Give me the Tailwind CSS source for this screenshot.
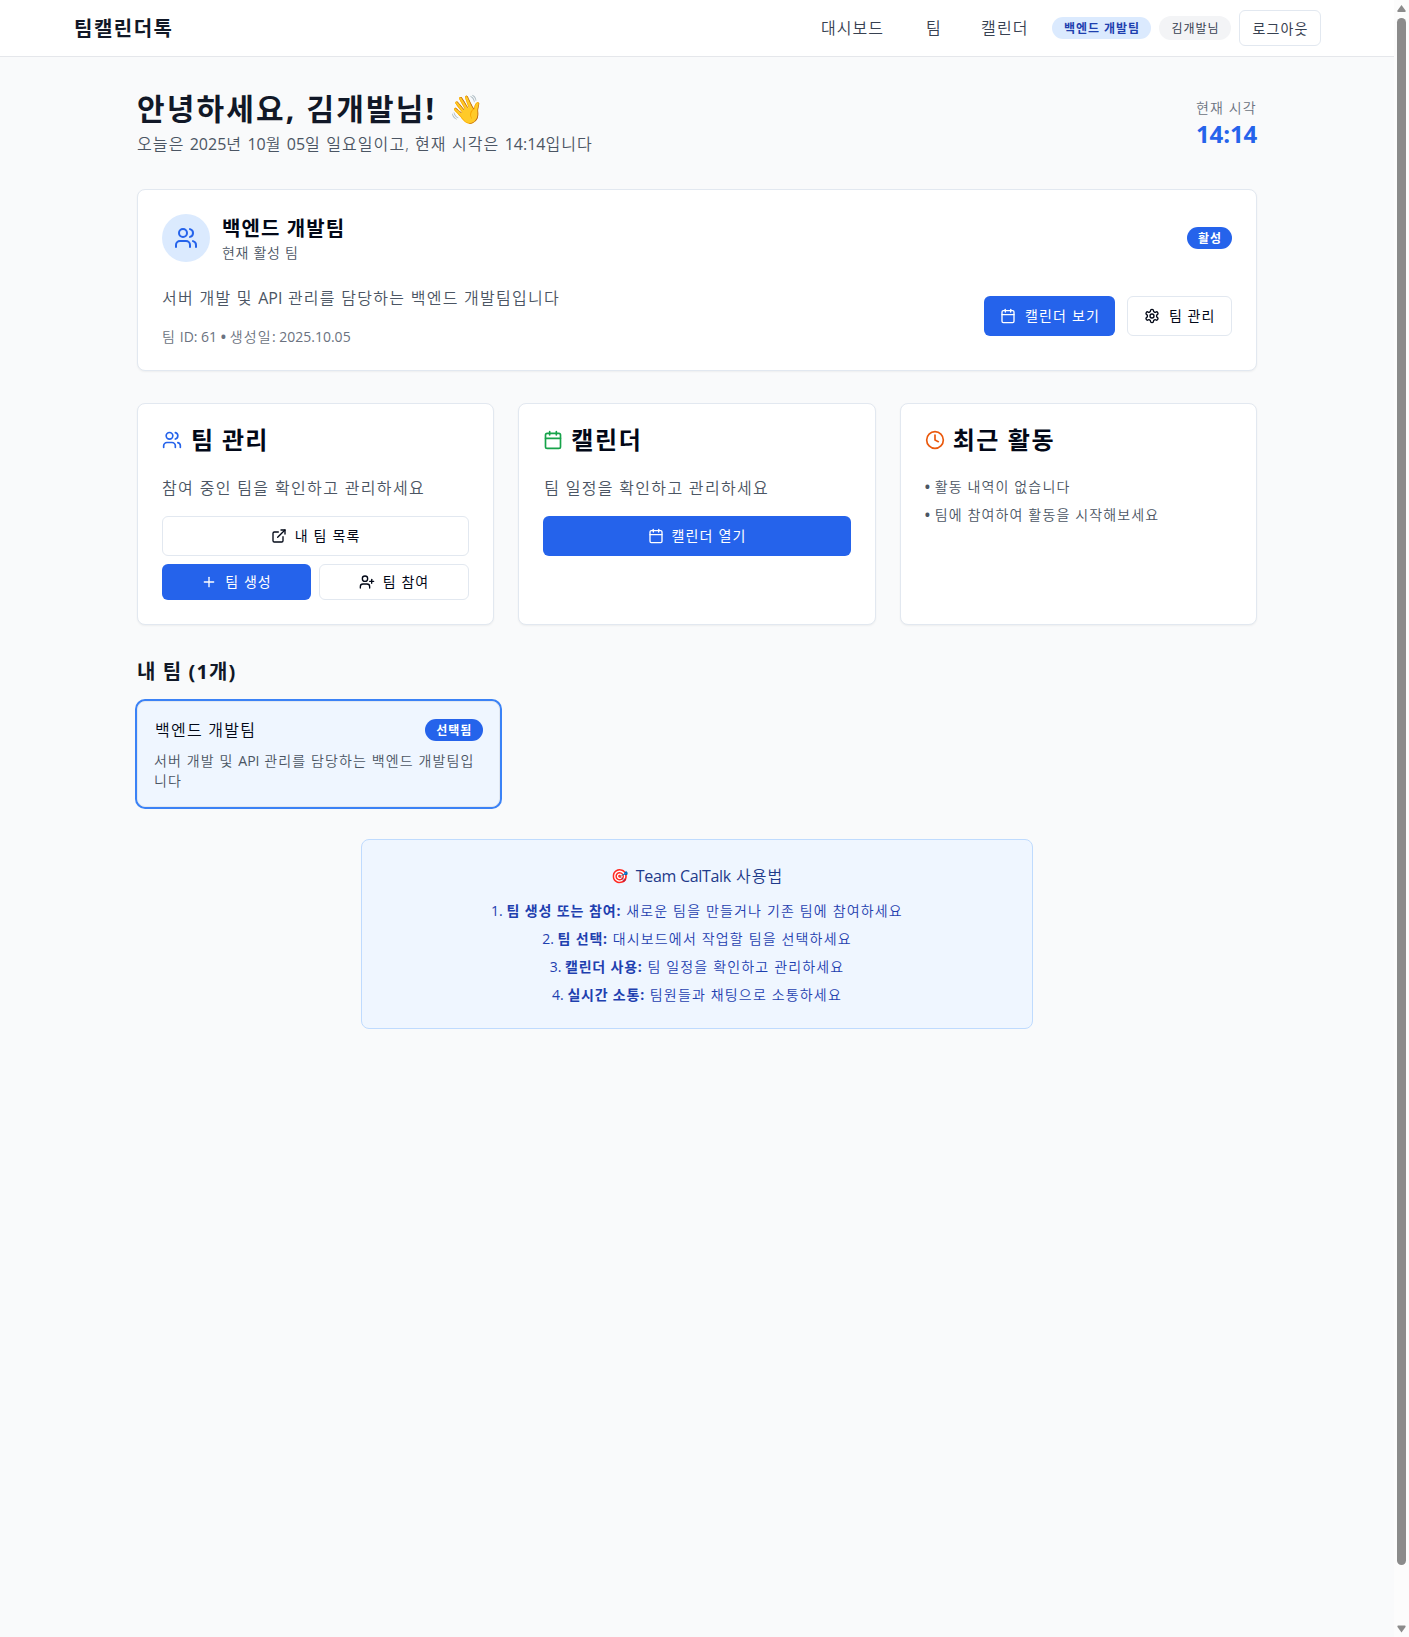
<!DOCTYPE html>
<html lang="ko">
<head>
<meta charset="utf-8">
<title>팀캘린더톡</title>
<script src="https://cdn.jsdelivr.net/npm/@tailwindcss/browser@4"></script>
</head>
<body class="flex h-[1637px] overflow-hidden bg-[#f9fafb] font-['Open_Sans','Noto_Sans_CJK_KR',sans-serif] font-[350] text-[#020817]">
<svg class="hidden">
  <g id="users"><path d="M16 21v-2a4 4 0 0 0-4-4H6a4 4 0 0 0-4 4v2"/><circle cx="9" cy="7" r="4"/><path d="M22 21v-2a4 4 0 0 0-3-3.87"/><path d="M16 3.13a4 4 0 0 1 0 7.75"/></g>
  <g id="calendar"><path d="M8 2v4"/><path d="M16 2v4"/><rect width="18" height="18" x="3" y="4" rx="2"/><path d="M3 10h18"/></g>
</svg>
<div class="flex min-w-0 flex-1 flex-col">
  <header class="h-[57px] border-b border-[#e5e7eb] bg-white">
    <div class="mx-auto flex h-14 max-w-7xl items-center justify-between px-4">
      <div class="whitespace-nowrap pl-px pt-0.5 text-xl font-bold tracking-[1.5px] text-[#111827]">팀캘린더톡</div>
      <div class="flex items-center whitespace-nowrap text-[#374151]">
        <nav class="flex items-center text-base">
          <a class="w-[105px] tracking-[1px]">대시보드</a>
          <a class="w-[55px]">팀</a>
          <a class="w-[71px] tracking-[1.2px]">캘린더</a>
        </nav>
        <div class="flex items-center gap-2">
          <span class="flex h-[22px] w-[99px] items-center justify-center rounded-full bg-[#dbeafe] pl-px pt-px text-xs font-bold tracking-[0.95px] text-[#1e40af]">백엔드 개발팀</span>
          <span class="flex h-6 w-[72px] items-center justify-center rounded-full bg-[#f3f4f6] pl-px pt-px text-xs font-normal tracking-[0.9px]">김개발님</span>
          <button class="flex h-9 w-[82px] items-center justify-center rounded-md border border-[#e2e8f0] bg-white pl-px pt-px text-sm font-normal tracking-[1.1px]">로그아웃</button>
        </div>
      </div>
    </div>
  </header>

  <main class="mx-auto w-[1120px] pt-8">
    <div class="flex h-[68px] items-center justify-between whitespace-nowrap">
      <div>
        <h1 class="flex h-9 items-center text-3xl font-bold text-[#111827]"><span class="w-[312px] tracking-[2.15px]">안녕하세요, 김개발님!</span><span class="text-[28px]">👋</span></h1>
        <p class="h-7 pt-[5px] text-base leading-6 tracking-[1.1px] text-[#4b5563]">오늘은 <span class="font-normal tracking-normal">2025</span>년 <span class="font-normal tracking-normal">10</span>월 <span class="font-normal tracking-normal">05</span>일 일요일이고, 현재 시각은 <span class="font-normal tracking-normal">14:14</span>입니다</p>
      </div>
      <div class="w-[61px] pt-px">
        <div class="text-sm tracking-[1.1px] text-[#6b7280]">현재 시각</div>
        <div class="text-2xl font-bold tracking-[-0.1px] text-[#2563eb]">14:14</div>
      </div>
    </div>

    <section class="mt-8 h-[182px] whitespace-nowrap rounded-lg border border-[#e2e8f0] bg-white p-6 shadow-xs">
      <div class="flex items-center justify-between">
        <div class="flex items-center gap-3">
          <div class="flex size-12 items-center justify-center rounded-full bg-[#dbeafe]">
            <svg class="size-6 text-[#2563eb]" viewBox="0 0 24 24" fill="none" stroke="currentColor" stroke-width="2" stroke-linecap="round" stroke-linejoin="round"><use href="#users"/></svg>
          </div>
          <div class="h-12 pt-px">
            <h3 class="text-xl font-bold leading-7 tracking-[1.1px]">백엔드 개발팀</h3>
            <p class="text-sm leading-5 tracking-[0.7px] text-[#4b5563]">현재 활성 팀</p>
          </div>
        </div>
        <span class="flex h-[22px] w-[45px] items-center justify-center rounded-full bg-[#2563eb] pl-px pt-px text-xs font-bold tracking-[0.9px] text-white">활성</span>
      </div>
      <div class="mt-6 flex h-[60px] items-center justify-between">
        <div class="h-[60px]">
          <p class="text-base leading-6 tracking-[1.27px] text-[#4b5563]">서버 개발 및 <span class="font-normal tracking-normal">API</span> 관리를 담당하는 백엔드 개발팀입니다</p>
          <p class="mt-[17px] text-sm leading-5 tracking-[1.2px] text-[#6b7280]">팀<span class="font-normal tracking-normal"> ID: 61 <span class="font-bold">•</span> </span>생성일<span class="font-normal tracking-normal">: 2025.10.05</span></p>
        </div>
        <div class="flex gap-3 text-sm font-normal">
          <button class="flex h-10 w-[131px] items-center rounded-md bg-[#2563eb] pl-4 tracking-[1.15px] text-white"><svg class="mr-[9px] size-4" viewBox="0 0 24 24" fill="none" stroke="currentColor" stroke-width="2" stroke-linecap="round" stroke-linejoin="round"><use href="#calendar"/></svg>캘린더 보기</button>
          <button class="flex h-10 w-[105px] items-center rounded-md border border-[#e2e8f0] bg-white pl-4 tracking-[1px]"><svg class="mr-[9px] size-4" viewBox="0 0 24 24" fill="none" stroke="currentColor" stroke-width="2" stroke-linecap="round" stroke-linejoin="round"><path d="M12.22 2h-.44a2 2 0 0 0-2 2v.18a2 2 0 0 1-1 1.73l-.43.25a2 2 0 0 1-2 0l-.15-.08a2 2 0 0 0-2.73.73l-.22.38a2 2 0 0 0 .73 2.73l.15.1a2 2 0 0 1 1 1.72v.51a2 2 0 0 1-1 1.74l-.15.09a2 2 0 0 0-.73 2.73l.22.38a2 2 0 0 0 2.73.73l.15-.08a2 2 0 0 1 2 0l.43.25a2 2 0 0 1 1 1.73V20a2 2 0 0 0 2 2h.44a2 2 0 0 0 2-2v-.18a2 2 0 0 1 1-1.73l.43-.25a2 2 0 0 1 2 0l.15.08a2 2 0 0 0 2.73-.73l.22-.39a2 2 0 0 0-.73-2.73l-.15-.08a2 2 0 0 1-1-1.74v-.5a2 2 0 0 1 1-1.74l.15-.09a2 2 0 0 0 .73-2.73l-.22-.38a2 2 0 0 0-2.73-.73l-.15.08a2 2 0 0 1-2 0l-.43-.25a2 2 0 0 1-1-1.73V4a2 2 0 0 0-2-2z"/><circle cx="12" cy="12" r="3"/></svg>팀 관리</button>
        </div>
      </div>
    </section>

    <div class="mt-8 grid h-[222px] grid-cols-3 gap-6 whitespace-nowrap">
      <section class="rounded-lg border border-[#e2e8f0] bg-white p-6 shadow-xs">
        <h3 class="flex h-6 items-center gap-[9px] text-2xl font-bold leading-none tracking-[1.3px]"><svg class="size-5 text-[#2563eb]" viewBox="0 0 24 24" fill="none" stroke="currentColor" stroke-width="2" stroke-linecap="round" stroke-linejoin="round"><use href="#users"/></svg>팀 관리</h3>
        <p class="mt-6 text-base leading-6 tracking-[1.35px] text-[#4b5563]">참여 중인 팀을 확인하고 관리하세요</p>
        <button class="mt-4 flex h-10 w-full items-center justify-center rounded-md border border-[#e2e8f0] text-sm font-normal tracking-[1.2px]"><svg class="mr-2 size-4" viewBox="0 0 24 24" fill="none" stroke="currentColor" stroke-width="2" stroke-linecap="round" stroke-linejoin="round"><path d="M15 3h6v6"/><path d="M10 14 21 3"/><path d="M18 13v6a2 2 0 0 1-2 2H5a2 2 0 0 1-2-2V8a2 2 0 0 1 2-2h6"/></svg>내 팀 목록</button>
        <div class="mt-2 grid grid-cols-[149px_150px] gap-2 text-sm font-normal tracking-[1px]">
          <button class="flex h-9 items-center justify-center rounded-md bg-[#2563eb] text-white"><svg class="mr-2 size-4" viewBox="0 0 24 24" fill="none" stroke="currentColor" stroke-width="2" stroke-linecap="round" stroke-linejoin="round"><path d="M5 12h14"/><path d="M12 5v14"/></svg>팀 생성</button>
          <button class="flex h-9 items-center justify-center rounded-md border border-[#e2e8f0]"><svg class="mr-2 size-4" viewBox="0 0 24 24" fill="none" stroke="currentColor" stroke-width="2" stroke-linecap="round" stroke-linejoin="round"><path d="M16 21v-2a4 4 0 0 0-4-4H6a4 4 0 0 0-4 4v2"/><circle cx="9" cy="7" r="4"/><path d="M19 8v6"/><path d="M22 11h-6"/></svg>팀 참여</button>
        </div>
      </section>
      <section class="rounded-lg border border-[#e2e8f0] bg-white p-6 shadow-xs">
        <h3 class="flex h-6 items-center gap-2 text-2xl font-bold leading-none tracking-[1.6px]"><svg class="size-5 text-[#16a34a]" viewBox="0 0 24 24" fill="none" stroke="currentColor" stroke-width="2" stroke-linecap="round" stroke-linejoin="round"><use href="#calendar"/></svg>캘린더</h3>
        <p class="mt-6 pl-px text-base leading-6 tracking-[1.3px] text-[#4b5563]">팀 일정을 확인하고 관리하세요</p>
        <button class="mt-4 flex h-10 w-full items-center justify-center rounded-md bg-[#2563eb] text-sm font-normal tracking-[1.15px] text-white"><svg class="mr-2 size-4" viewBox="0 0 24 24" fill="none" stroke="currentColor" stroke-width="2" stroke-linecap="round" stroke-linejoin="round"><use href="#calendar"/></svg>캘린더 열기</button>
      </section>
      <section class="rounded-lg border border-[#e2e8f0] bg-white p-6 shadow-xs">
        <h3 class="flex h-6 items-center gap-2 text-2xl font-bold leading-none tracking-[1.6px]"><svg class="size-5 text-[#ea580c]" viewBox="0 0 24 24" fill="none" stroke="currentColor" stroke-width="2" stroke-linecap="round" stroke-linejoin="round"><circle cx="12" cy="12" r="10"/><path d="M12 6v6l4 2"/></svg>최근 활동</h3>
        <div class="mt-[25px] flex flex-col gap-2 text-sm leading-5 tracking-[1.14px] text-[#4b5563]">
          <p><span class="font-bold tracking-normal">•</span> 활동 내역이 없습니다</p>
          <p><span class="font-bold tracking-normal">•</span> 팀에 참여하여 활동을 시작해보세요</p>
        </div>
      </section>
    </div>

    <h2 class="mt-8 h-7 pt-px text-xl font-bold leading-7 tracking-[1.1px] text-[#111827]">내 팀 (1개)</h2>
    <div class="mt-4 grid grid-cols-3 gap-4">
      <div class="h-[106px] rounded-lg border border-[#e2e8f0] bg-[#eff6ff] p-4 ring-2 ring-[#3b82f6]">
        <div class="flex h-6 items-center justify-between pl-px">
          <h4 class="text-base tracking-[1.25px]">백엔드 개발팀</h4>
          <span class="flex h-[22px] w-[58px] items-center justify-center rounded-full bg-[#2563eb] pl-px pt-px text-xs font-bold tracking-[0.95px] text-white">선택됨</span>
        </div>
        <p class="mt-[9px] whitespace-nowrap text-sm leading-5 tracking-[1.12px] text-[#4b5563]">서버 개발 및 <span class="font-normal tracking-normal">API</span> 관리를 담당하는 백엔드 개발팀입<br>니다</p>
      </div>
    </div>

    <section class="mx-auto mt-8 h-[190px] w-[672px] whitespace-nowrap rounded-lg border border-[#bfdbfe] bg-[#eff6ff] p-6 text-center">
      <h3 class="flex h-6 items-center justify-center gap-2 text-base text-[#1e3a8a]"><span class="text-sm">🎯</span><span class="tracking-[1px]"><span class="font-normal tracking-[-0.3px]">Team CalTalk</span> 사용법</span></h3>
      <div class="mt-[13px] flex flex-col gap-2 text-sm leading-5 tracking-[1.16px] text-[#1e40af]">
        <p><span class="font-normal tracking-normal">1. </span><b class="font-bold tracking-[0.9px]">팀 생성 또는 참여:</b> 새로운 팀을 만들거나 기존 팀에 참여하세요</p>
        <p><span class="font-normal tracking-normal">2. </span><b class="font-bold tracking-[0.8px]">팀 선택:</b> 대시보드에서 작업할 팀을 선택하세요</p>
        <p><span class="font-normal tracking-normal">3. </span><b class="font-bold tracking-[0.8px]">캘린더 사용:</b> 팀 일정을 확인하고 관리하세요</p>
        <p><span class="font-normal tracking-normal">4. </span><b class="font-bold tracking-[0.8px]">실시간 소통:</b> 팀원들과 채팅으로 소통하세요</p>
      </div>
    </section>
  </main>
</div>
<aside class="flex w-[15px] flex-col items-center bg-[#fcfcfc] pt-1 pb-1">
  <svg class="h-[14px] w-[15px]" viewBox="0 0 15 14"><path d="M7.500 1 11.500 6.500Q12 8 11 8H4Q3 8 3.500 6.500Z" fill="#8b8b8b"/></svg>
  <div class="h-[1547px] w-[9px] rounded-full bg-[#8b8b8b]"></div>
  <div class="flex-1"></div>
  <svg class="h-[8px] w-[15px]" viewBox="0 0 15 8"><path d="M7.500 7.500 3.500 2Q3 .5 4 .5H11Q12 .5 11.500 2Z" fill="#8b8b8b"/></svg>
</aside>
</body>
</html>
